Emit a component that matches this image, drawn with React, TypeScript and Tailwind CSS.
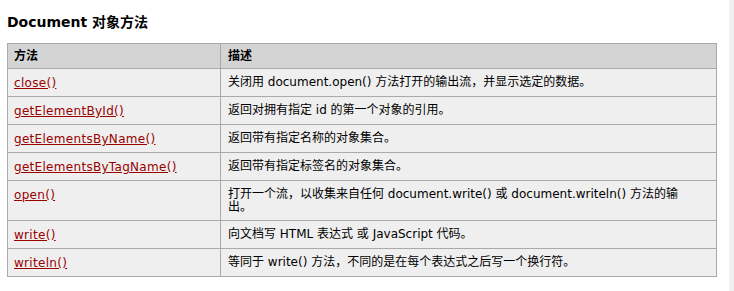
const ROWS: { name: string; desc: React.ReactNode }[] = [
  { name: "close()", desc: "关闭用 document.open() 方法打开的输出流，并显示选定的数据。" },
  { name: "getElementById()", desc: "返回对拥有指定 id 的第一个对象的引用。" },
  { name: "getElementsByName()", desc: "返回带有指定名称的对象集合。" },
  { name: "getElementsByTagName()", desc: "返回带有指定标签名的对象集合。" },
  {
    name: "open()",
    desc: (
      <>
        打开一个流，以收集来自任何 document.write() 或 document.writeln() 方法的输
        <br />
        出。
      </>
    ),
  },
  { name: "write()", desc: "向文档写 HTML 表达式 或 JavaScript 代码。" },
  { name: "writeln()", desc: "等同于 write() 方法，不同的是在每个表达式之后写一个换行符。" },
];

export default function App() {
  return (
    <div className="flex h-[291px] w-[734px] bg-white font-['DejaVu_Sans','Noto_Sans_CJK_SC',sans-serif] text-[12px] text-black">
      <div className="flex-1 pl-[7px] pt-[14px]">
        <h2 className="mb-[12px] h-[17px] text-[14px] leading-[17px] font-bold">
          Document 对象方法
        </h2>
        <table className="w-[710px] border-collapse border border-[#aaaaaa]">
          <thead>
            <tr className="bg-[#d4d4d4]">
              <th className="w-[213px] border border-[#aaaaaa] px-[6px] pt-[5px] pb-[5px] text-left leading-[14px] font-bold">
                方法
              </th>
              <th className="border border-[#aaaaaa] px-[7px] pt-[5px] pb-[5px] text-left leading-[14px] font-bold">
                描述
              </th>
            </tr>
          </thead>
          <tbody>
            {ROWS.map((r) => (
              <tr key={r.name} className="bg-[#efefef]">
                <td className="border border-[#aaaaaa] px-[6px] pt-[7px] pb-[6px] align-top leading-[14px]">
                  <a href="#" className="tracking-[0.3px] text-[#990000] underline">
                    {r.name}
                  </a>
                </td>
                <td className="border border-[#aaaaaa] px-[7px] pt-[7px] pb-[6px] align-top leading-[13px]">
                  {r.desc}
                </td>
              </tr>
            ))}
          </tbody>
        </table>
      </div>
      <div className="w-[5px] bg-[#f0f0f0]" />
    </div>
  );
}
